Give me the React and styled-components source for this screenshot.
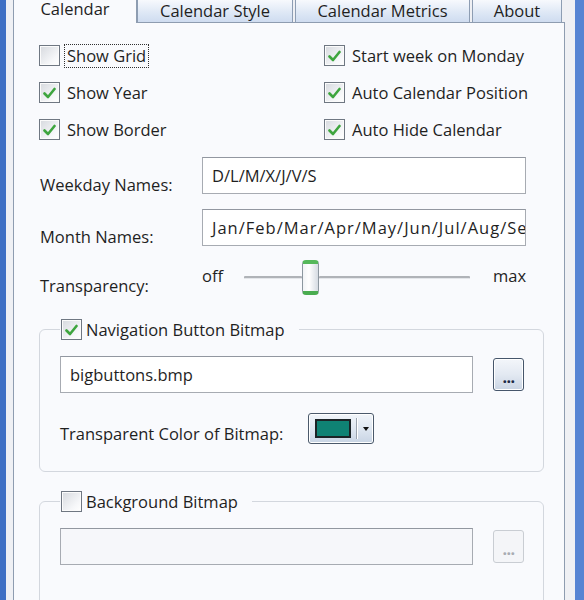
import React from "react";
import styled, { createGlobalStyle } from "styled-components";

const Global = createGlobalStyle`
  html, body {
    margin: 0;
    padding: 0;
    background: #f0f1f5;
  }
  body {
    font-family: "Open Sans", "Noto Sans", sans-serif;
    font-size: 16.5px;
    color: #1f1f1f;
    overflow: hidden;
  }
`;

const Window = styled.div`
  height: 600px;
  box-sizing: border-box;
  border-left: 6px solid #3f6fc4;
  border-right: 9px solid #5784d3;
  background: #eff0f4;
  padding: 0 10px 0 7px;
  overflow: hidden;
`;

const TabBar = styled.div`
  display: flex;
  align-items: flex-end;
  height: 23px;
  margin-bottom: -1px;
  position: relative;
  z-index: 1;
`;

const Tab = styled.div`
  box-sizing: border-box;
  display: flex;
  justify-content: center;
  width: ${(p) => p.$w}px;
  margin-right: ${(p) => (p.$active ? 0 : 2)}px;
  ${(p) =>
    p.$active
      ? `
    height: 32px;
    padding-top: 6px;
    line-height: 22px;
    background: #f9fafd;
    border: 1px solid #8e9cb0;
    border-bottom: none;
  `
      : `
    height: 23px;
    margin-bottom: 1px;
    line-height: 21px;
    background: linear-gradient(#f7f9fd, #dde7f5 60%, #cfdcf0);
    border: 1px solid #8d9db3;
    border-bottom: none;
  `}
`;

const Pane = styled.div`
  box-sizing: border-box;
  height: 620px;
  border: 1px solid #8e9cb0;
  background: #f9fafd;
  padding: 14px 20px 0 25px;
`;

const CheckGrid = styled.div`
  display: grid;
  grid-template-columns: 285px 1fr;
  grid-auto-rows: 37px;
`;

const CheckRow = styled.label`
  display: flex;
  align-items: center;
  gap: 4px;
  white-space: nowrap;
`;

const Box = styled.span`
  box-sizing: border-box;
  width: 21px;
  height: 21px;
  flex: none;
  border: 1px solid #6f7782;
  background: linear-gradient(135deg, #d6d9de, #f6f7f9 70%, #ffffff);
  box-shadow: inset 0 0 0 1px #fbfbfb;
  display: flex;
  align-items: center;
  justify-content: center;
`;

const CheckText = styled.span`
  padding: 0 2px;
  line-height: 22px;
  border: 1px dotted ${(p) => (p.$focus ? "#303030" : "transparent")};
`;

const FieldRow = styled.div`
  display: grid;
  grid-template-columns: 163px 1fr;
  margin-right: 18px;
  margin-top: ${(p) => p.$top}px;
`;

const FieldLabel = styled.span`
  align-self: end;
  line-height: 22px;
  margin-bottom: -2px;
  padding-left: 1px;
  white-space: nowrap;
`;

const TextBox = styled.div`
  box-sizing: border-box;
  height: ${(p) => p.$h || 37}px;
  border: 1px solid #a7abb2;
  border-top-color: #9297a0;
  background: ${(p) => (p.$disabled ? "#f6f7fa" : "#ffffff")};
  padding: 0 9px;
  display: flex;
  align-items: center;
  white-space: nowrap;
  overflow: hidden;
  flex: 1;
  letter-spacing: ${(p) => p.$spacing || 0}px;
`;

const SliderWrap = styled.div`
  display: flex;
  align-items: center;
  height: 35px;
`;

const SliderEnd = styled.span`
  width: ${(p) => p.$w}px;
  margin-top: -5px;
  text-align: ${(p) => p.$align};
`;

const Track = styled.div`
  flex: 1;
  height: 35px;
  margin: 0 23px 0 18px;
  display: flex;
  align-items: center;
  &::before {
    content: "";
    display: block;
    height: 2px;
    width: 58px;
    border-radius: 1px;
    background: #b0b3b8;
    border-bottom: 1px solid #e4e6ea;
  }
  &::after {
    content: "";
    display: block;
    height: 2px;
    flex: 1;
    border-radius: 1px;
    background: #b0b3b8;
    border-bottom: 1px solid #e4e6ea;
  }
`;

const Thumb = styled.div`
  box-sizing: border-box;
  width: 17px;
  height: 35px;
  flex: none;
  border: 1px solid #8c979f;
  border-radius: 4px;
  background: linear-gradient(90deg, #f2f4f6, #ffffff 40%, #d5dbe2);
  border-top: 4px solid #55b85a;
  border-bottom: 4px solid #4aac50;
`;

const Group = styled.fieldset`
  margin: ${(p) => p.$top}px 0 0;
  padding: 0 19px ${(p) => p.$bottom}px 20px;
  border: 1px solid #d3d7de;
  border-radius: 6px;
  min-width: 0;
`;

const Legend = styled.legend`
  margin-left: 0;
  padding: 0 14px 0 1px;
  display: flex;
  align-items: center;
  gap: 4px;
  height: 21px;
`;

const InputRow = styled.div`
  display: flex;
  align-items: center;
  gap: 20px;
  margin-top: 16px;
`;

const Browse = styled.div`
  box-sizing: border-box;
  width: 31px;
  height: 33px;
  flex: none;
  border: 1px solid ${(p) => (p.$disabled ? "#c9cdd3" : "#46566b")};
  border-radius: 3px;
  background: ${(p) =>
    p.$disabled
      ? "#f4f5f8"
      : "linear-gradient(#f3f6fa, #e3e9f2 50%, #c9d4e3)"};
  box-shadow: ${(p) => (p.$disabled ? "none" : "inset 0 0 0 1px #ffffff")};
  color: ${(p) => (p.$disabled ? "#a8acb2" : "#1c2a44")};
  font-size: 16px;
  font-weight: 700;
  letter-spacing: -0.5px;
  display: flex;
  align-items: flex-end;
  justify-content: center;
  padding-bottom: 8px;
  line-height: 10px;
`;

const ColorRow = styled.div`
  display: flex;
  align-items: flex-end;
  gap: 25px;
  margin-top: 20px;
`;

const ColorLabel = styled.span`
  line-height: 22px;
  margin-bottom: -1px;
`;

const ColorButton = styled.div`
  box-sizing: border-box;
  width: 66px;
  height: 31px;
  border: 1px solid #4b596b;
  border-radius: 3px;
  background: linear-gradient(#f1f5fa, #dfe7f1 50%, #c8d4e4);
  box-shadow: inset 0 0 0 1px #ffffff;
  display: flex;
  align-items: center;
  padding-left: 6px;
  gap: 5px;
`;

const Swatch = styled.span`
  box-sizing: border-box;
  width: 36px;
  height: 19px;
  border: 2px solid #1b2326;
  background: ${(p) => p.$color};
`;

const Split = styled.span`
  width: 1px;
  height: 21px;
  background: #9aa3ae;
  border-right: 1px solid #ffffff;
`;

const Arrow = styled.span`
  width: 0;
  height: 0;
  border-left: 3px solid transparent;
  border-right: 3px solid transparent;
  border-top: 4px solid #111;
`;

function Check({ checked }) {
  return (
    <Box>
      {checked && (
        <svg width="13" height="12" viewBox="0 0 13 12">
          <path
            d="M1.5 6.5 L5 10 L11.5 2"
            fill="none"
            stroke="#3ea53e"
            strokeWidth="2.6"
            strokeLinecap="round"
            strokeLinejoin="round"
          />
        </svg>
      )}
    </Box>
  );
}

const options = [
  ["Show Grid", false, true],
  ["Start week on Monday", true],
  ["Show Year", true],
  ["Auto Calendar Position", true],
  ["Show Border", true],
  ["Auto Hide Calendar", true],
];

const tabs = [
  ["Calendar", 124, true],
  ["Calendar Style", 156],
  ["Calendar Metrics", 175],
  ["About", 90],
];

export default function App() {
  return (
    <>
      <Global />
      <Window>
        <TabBar>
          {tabs.map(([name, w, active]) => (
            <Tab key={name} $w={w} $active={active}>
              {name}
            </Tab>
          ))}
        </TabBar>
        <Pane>
          <CheckGrid>
            {options.map(([text, checked, focus]) => (
              <CheckRow key={text}>
                <Check checked={checked} />
                <CheckText $focus={focus}>{text}</CheckText>
              </CheckRow>
            ))}
          </CheckGrid>

          <FieldRow $top={9}>
            <FieldLabel>Weekday Names:</FieldLabel>
            <TextBox>D/L/M/X/J/V/S</TextBox>
          </FieldRow>
          <FieldRow $top={15}>
            <FieldLabel>Month Names:</FieldLabel>
            <TextBox $spacing={1}>
              Jan/Feb/Mar/Apr/May/Jun/Jul/Aug/Sep/Oct/Nov/Dec
            </TextBox>
          </FieldRow>
          <FieldRow $top={14}>
            <FieldLabel>Transparency:</FieldLabel>
            <SliderWrap>
              <SliderEnd $w={24} $align="left">off</SliderEnd>
              <Track>
                <Thumb />
              </Track>
              <SliderEnd $w={33} $align="right">max</SliderEnd>
            </SliderWrap>
          </FieldRow>

          <Group $top={24} $bottom={27}>
            <Legend>
              <Check checked />
              <span>Navigation Button Bitmap</span>
            </Legend>
            <InputRow>
              <TextBox>bigbuttons.bmp</TextBox>
              <Browse>...</Browse>
            </InputRow>
            <ColorRow>
              <ColorLabel>Transparent Color of Bitmap:</ColorLabel>
              <ColorButton>
                <Swatch $color="#0f8274" />
                <Split />
                <Arrow />
              </ColorButton>
            </ColorRow>
          </Group>

          <Group $top={19} $bottom={40}>
            <Legend>
              <Check />
              <span>Background Bitmap</span>
            </Legend>
            <InputRow>
              <TextBox $disabled />
              <Browse $disabled>...</Browse>
            </InputRow>
          </Group>
        </Pane>
      </Window>
    </>
  );
}
